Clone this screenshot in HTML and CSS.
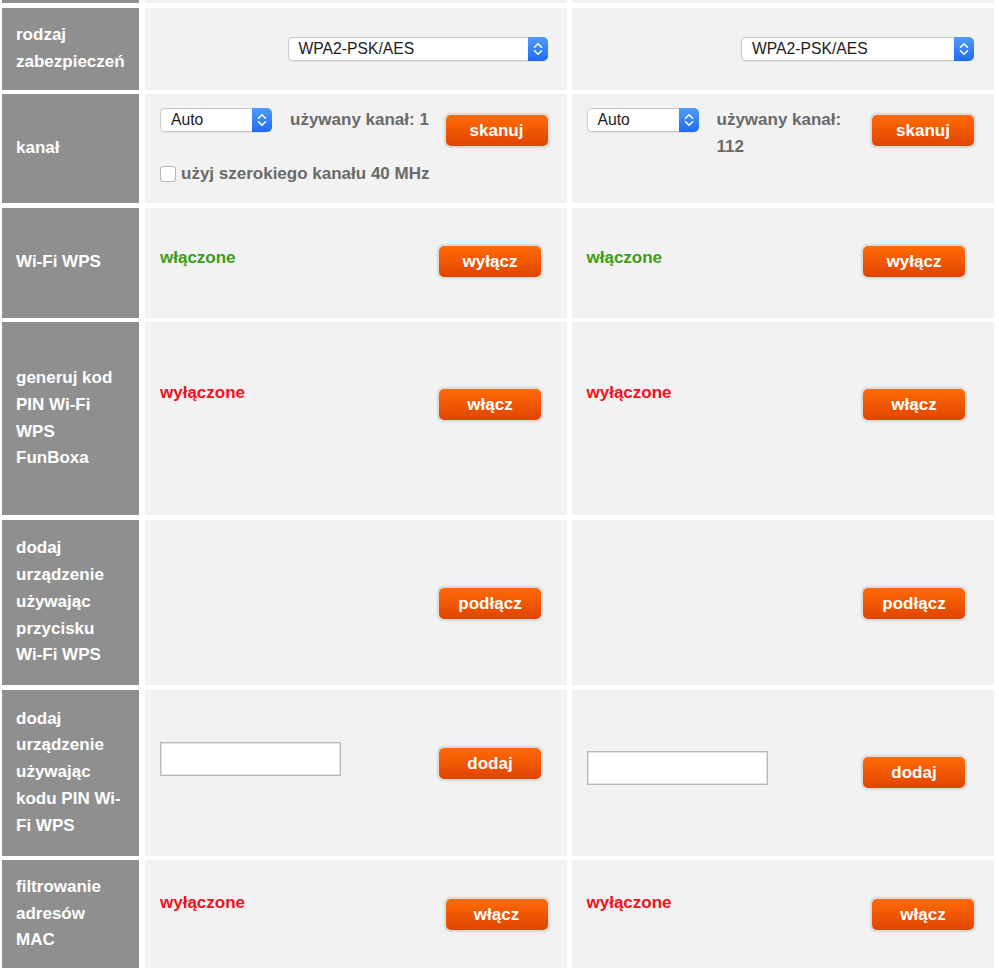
FILE: index.html
```html
<!DOCTYPE html>
<html lang="pl">
<head>
<meta charset="utf-8">
<title>Wi-Fi</title>
<link rel="stylesheet" href="styles.css">
</head>
<body>
<div class="grid">
  <div class="lab"></div><div class="cell"></div><div class="cell"></div>

  <div class="lab">rodzaj<br>zabezpieczeń</div>
  <div class="cell c1 r1 near-l">
    <div class="select w-a"><span class="sel-text">WPA2-PSK/AES</span><span class="stepper"><svg width="20" height="24" viewBox="0 0 20 24"><path d="M6.5 10.2 L10 6.8 L13.5 10.2 M6.5 13.8 L10 17.2 L13.5 13.8" fill="none" stroke="#fff" stroke-width="1.6" stroke-linecap="round" stroke-linejoin="round"/></svg></span></div>
  </div>
  <div class="cell c2 r1 near-r">
    <div class="select w-b"><span class="sel-text">WPA2-PSK/AES</span><span class="stepper"><svg width="20" height="24" viewBox="0 0 20 24"><path d="M6.5 10.2 L10 6.8 L13.5 10.2 M6.5 13.8 L10 17.2 L13.5 13.8" fill="none" stroke="#fff" stroke-width="1.6" stroke-linecap="round" stroke-linejoin="round"/></svg></span></div>
  </div>

  <div class="lab">kanał</div>
  <div class="cell c1 r2 near-l">
    <div class="chan-line">
      <div class="select w-auto"><span class="sel-text">Auto</span><span class="stepper"><svg width="20" height="24" viewBox="0 0 20 24"><path d="M6.5 10.2 L10 6.8 L13.5 10.2 M6.5 13.8 L10 17.2 L13.5 13.8" fill="none" stroke="#fff" stroke-width="1.6" stroke-linecap="round" stroke-linejoin="round"/></svg></span></div>
      <div class="used">używany kanał: 1</div>
      <button class="btn btn-chan">skanuj</button>
    </div>
    <div class="wide"><span class="box"></span>użyj szerokiego kanału 40 MHz</div>
  </div>
  <div class="cell c2 r2 near-r">
    <div class="chan-line">
      <div class="select w-auto"><span class="sel-text">Auto</span><span class="stepper"><svg width="20" height="24" viewBox="0 0 20 24"><path d="M6.5 10.2 L10 6.8 L13.5 10.2 M6.5 13.8 L10 17.2 L13.5 13.8" fill="none" stroke="#fff" stroke-width="1.6" stroke-linecap="round" stroke-linejoin="round"/></svg></span></div>
      <div class="used">używany kanał: 112</div>
      <button class="btn btn-chan">skanuj</button>
    </div>
  </div>

  <div class="lab">Wi-Fi WPS</div>
  <div class="cell c1 r3 far-l"><span class="status on">włączone</span><button class="btn">wyłącz</button></div>
  <div class="cell c2 r3 far-r"><span class="status on">włączone</span><button class="btn">wyłącz</button></div>

  <div class="lab">generuj kod<br>PIN Wi-Fi<br>WPS<br>FunBoxa</div>
  <div class="cell c1 r4 far-l"><span class="status off">wyłączone</span><button class="btn">włącz</button></div>
  <div class="cell c2 r4 far-r"><span class="status off">wyłączone</span><button class="btn">włącz</button></div>

  <div class="lab">dodaj<br>urządzenie<br>używając<br>przycisku<br>Wi-Fi WPS</div>
  <div class="cell c1 r5 far-l"><button class="btn">podłącz</button></div>
  <div class="cell c2 r5 far-r"><button class="btn">podłącz</button></div>

  <div class="lab">dodaj<br>urządzenie<br>używając<br>kodu PIN Wi-<br>Fi WPS</div>
  <div class="cell c1 r6a far-l"><input class="pin" type="text"><button class="btn">dodaj</button></div>
  <div class="cell c2 r6b far-r"><input class="pin" type="text"><button class="btn">dodaj</button></div>

  <div class="lab">filtrowanie<br>adresów<br>MAC</div>
  <div class="cell c1 r7 near-l"><span class="status off">wyłączone</span><button class="btn">włącz</button></div>
  <div class="cell c2 r7 near-r"><span class="status off">wyłączone</span><button class="btn">włącz</button></div>
</div>
</body>
</html>
```

FILE: styles.css
```css
html, body {
  margin: 0;
  padding: 0;
  background: #ffffff;
}

body {
  font-family: "Liberation Sans", Arial, Helvetica, sans-serif;
}

.grid {
  display: grid;
  grid-template-columns: 137px 422px 422px;
  grid-template-rows: 3px 82px 109px 110px 193px 165.5px 166px 108px;
  gap: 4.5px 5.5px;
  padding-left: 2px;
}

.lab {
  background: #8f8f8f;
  color: #ffffff;
  font-weight: bold;
  font-size: 17px;
  line-height: 26.8px;
  padding-left: 14px;
  display: flex;
  align-items: center;
  white-space: nowrap;
}

.cell {
  background: #f2f2f2;
  display: flex;
  align-items: flex-start;
  box-sizing: border-box;
}

.c1 { padding-left: 15.5px; }
.c2 { padding-left: 14.5px; }

.near-l { padding-right: 19px; }
.near-r { padding-right: 20px; }
.far-l { padding-right: 25.5px; }
.far-r { padding-right: 29px; }

/* select */
.select {
  display: flex;
  height: 24px;
  flex: none;
  border-radius: 5px;
  box-shadow: 0 1px 1px rgba(0, 0, 0, 0.07);
}

.sel-text {
  flex: 1;
  box-sizing: border-box;
  height: 24px;
  border: 1px solid #c9c9c9;
  border-right: none;
  border-radius: 5px 0 0 5px;
  background: #ffffff;
  padding-left: 10px;
  font-size: 15.7px;
  line-height: 22px;
  color: #1b1b1b;
  white-space: nowrap;
}

.stepper {
  width: 20px;
  height: 24px;
  border-radius: 0 5px 5px 0;
  background: linear-gradient(#519bfb, #1d6cf2);
  display: flex;
}

.w-a { width: 260px; }
.w-b { width: 233px; }
.w-auto { width: 112px; }

/* row 1 */
.r1 {
  align-items: center;
  justify-content: flex-end;
}

/* row 2 */
.r2 {
  flex-direction: column;
  padding-top: 13.5px;
}

.chan-line {
  display: flex;
  align-items: flex-start;
  align-self: stretch;
}

.used {
  margin: -1.5px 0 0 18px;
  width: 150px;
  color: #6a6a6a;
  font-weight: bold;
  font-size: 17px;
  line-height: 27px;
}

.btn-chan { margin-top: 7.5px; }

.wide {
  margin-top: 14px;
  display: flex;
  align-items: center;
  gap: 5px;
  color: #6a6a6a;
  font-weight: bold;
  font-size: 17px;
  line-height: 27px;
  white-space: nowrap;
}

.box {
  width: 16px;
  height: 16px;
  box-sizing: border-box;
  border: 1px solid #b4b4b4;
  border-radius: 3px;
  background: #ffffff;
}

/* buttons */
.btn {
  flex: none;
  margin-left: auto;
  width: 102px;
  height: 31px;
  padding: 0;
  border: none;
  border-radius: 5px;
  background: linear-gradient(#ff6b06, #e04400);
  box-shadow: 0 0 0 2px #dcdcdc, 0 0 3px 2px rgba(0, 0, 0, 0.07);
  color: #ffffff;
  font-family: "Liberation Sans", Arial, Helvetica, sans-serif;
  font-weight: bold;
  font-size: 17px;
  line-height: 31px;
  text-align: center;
}

.status {
  font-weight: bold;
  font-size: 17px;
  line-height: 27px;
}

.on { color: #3a9e17; }
.off { color: #f5101c; }

/* rows 3 - 7 */
.r3 { padding-top: 36px; }
.r3 .btn { margin-top: 2px; }

.r4 { padding-top: 57px; }
.r4 .btn { margin-top: 10px; }

.r5 { padding-top: 68px; }

.r6a { padding-top: 52px; }
.r6a .btn { margin-top: 6px; }
.r6b { padding-top: 61px; }
.r6b .btn { margin-top: 6.5px; }

.r7 { padding-top: 29px; }
.r7 .btn { margin-top: 9.5px; }

.pin {
  width: 181px;
  height: 34px;
  box-sizing: border-box;
  margin: 0;
  padding: 0;
  border: 1px solid #bababa;
  box-shadow: inset 0 0 0 1px #e2e2e2;
  background: #ffffff;
  outline: none;
}
```
